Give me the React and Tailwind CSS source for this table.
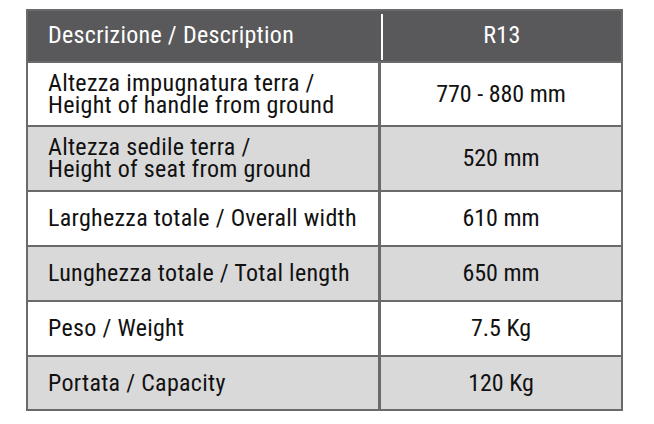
const rows = [
  { label: ["Altezza impugnatura terra /", "Height of handle from ground"], value: "770 - 880 mm", h: "h-[64px]", bg: "bg-white" },
  { label: ["Altezza sedile terra /", "Height of seat from ground"], value: "520 mm", h: "h-[65px]", bg: "bg-[#d9d9d9]" },
  { label: ["Larghezza totale / Overall width"], value: "610 mm", h: "h-[55px]", bg: "bg-white" },
  { label: ["Lunghezza totale / Total length"], value: "650 mm", h: "h-[55px]", bg: "bg-[#d9d9d9]" },
  { label: ["Peso / Weight"], value: "7.5 Kg", h: "h-[55px]", bg: "bg-white" },
  { label: ["Portata / Capacity"], value: "120 Kg", h: "h-[54px]", bg: "bg-[#d9d9d9]" },
];

export default function App() {
  return (
    <div className="w-[654px] h-[424px] bg-white pt-[9px] pl-[26px] font-['Roboto_Condensed','Roboto',sans-serif] font-stretch-condensed text-[24px] tracking-[0.3px] text-[#111]">
      <div className="w-[597px] border-2 border-[#6a6a6a] flex flex-col">
        <div className="flex h-[50px] bg-[#59595b] text-white">
          <div className="w-[353px] flex items-center pl-[20px] pb-[2px]">Descrizione / Description</div>
          <div className="w-[2px] bg-white mt-[3px] mb-[1px]"></div>
          <div className="flex-1 flex items-center justify-center pb-[2px]">R13</div>
        </div>
        {rows.map((r, i) => (
          <div key={i} className={`flex border-t-2 border-[#6a6a6a] ${r.h} ${r.bg}`}>
            <div className="w-[353px] border-r-[3px] border-[#6a6a6a] flex flex-col justify-center pl-[20px] leading-[22px] pb-[1px]">
              {r.label.map((l, j) => (
                <span key={j}>{l}</span>
              ))}
            </div>
            <div className="flex-1 flex items-center justify-center pb-[1px] tracking-normal">{r.value}</div>
          </div>
        ))}
      </div>
    </div>
  );
}
